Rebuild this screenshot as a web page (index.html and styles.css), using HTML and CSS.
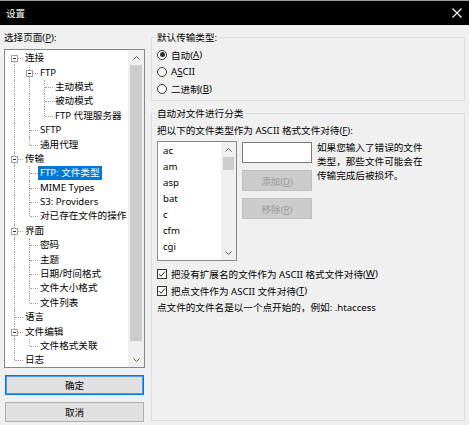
FILE: index.html
```html
<!DOCTYPE html>
<html lang="zh-CN">
<head>
    <meta charset="UTF-8">
    <meta name="viewport" content="width=device-width, initial-scale=1.0">
    <link rel="stylesheet" href="styles.css">
    <title>设置</title>
</head>
<body>
    <div class="titlebar">
        <span class="title">设置</span>
        <svg class="close" width="10" height="10" viewBox="0 0 10 10"><path d="M0.5 0.5L9.5 9.5M9.5 0.5L0.5 9.5" stroke="#fff" stroke-width="1.1"/></svg>
    </div>
    <div class="content">
        <div class="sidebar">
            <div class="label">选择页面(<u>P</u>):</div>
            <div class="tree">
                <div class="nodes">
                    <div class="node"><span class="g f"><i class="box"></i></span><span class="txt">连接</span></div>
                    <div class="node"><span class="g v"></span><span class="g t"><i class="box"></i></span><span class="txt">FTP</span></div>
                    <div class="node"><span class="g v"></span><span class="g v"></span><span class="g t"></span><span class="txt">主动模式</span></div>
                    <div class="node"><span class="g v"></span><span class="g v"></span><span class="g t"></span><span class="txt">被动模式</span></div>
                    <div class="node"><span class="g v"></span><span class="g v"></span><span class="g l"></span><span class="txt">FTP 代理服务器</span></div>
                    <div class="node"><span class="g v"></span><span class="g t"></span><span class="txt">SFTP</span></div>
                    <div class="node"><span class="g v"></span><span class="g l"></span><span class="txt">通用代理</span></div>
                    <div class="node"><span class="g t"><i class="box"></i></span><span class="txt">传输</span></div>
                    <div class="node"><span class="g v"></span><span class="g t"></span><span class="txt sel">FTP: 文件类型</span></div>
                    <div class="node"><span class="g v"></span><span class="g t"></span><span class="txt">MIME Types</span></div>
                    <div class="node"><span class="g v"></span><span class="g t"></span><span class="txt">S3: Providers</span></div>
                    <div class="node"><span class="g v"></span><span class="g l"></span><span class="txt">对已存在文件的操作</span></div>
                    <div class="node"><span class="g t"><i class="box"></i></span><span class="txt">界面</span></div>
                    <div class="node"><span class="g v"></span><span class="g t"></span><span class="txt">密码</span></div>
                    <div class="node"><span class="g v"></span><span class="g t"></span><span class="txt">主题</span></div>
                    <div class="node"><span class="g v"></span><span class="g t"></span><span class="txt">日期/时间格式</span></div>
                    <div class="node"><span class="g v"></span><span class="g t"></span><span class="txt">文件大小格式</span></div>
                    <div class="node"><span class="g v"></span><span class="g l"></span><span class="txt">文件列表</span></div>
                    <div class="node"><span class="g t"></span><span class="txt">语言</span></div>
                    <div class="node"><span class="g t"><i class="box"></i></span><span class="txt">文件编辑</span></div>
                    <div class="node"><span class="g v"></span><span class="g l"></span><span class="txt">文件格式关联</span></div>
                    <div class="node"><span class="g l"></span><span class="txt">日志</span></div>
                </div>
                <div class="scrollbar">
                    <div class="arrow"><svg width="7" height="4" viewBox="0 0 7 4"><path d="M0.5 3.5L3.5 0.5L6.5 3.5" fill="none" stroke="#606060"/></svg></div>
                    <div class="track"><div class="thumb"></div></div>
                    <div class="arrow"><svg width="7" height="4" viewBox="0 0 7 4"><path d="M0.5 0.5L3.5 3.5L6.5 0.5" fill="none" stroke="#606060"/></svg></div>
                </div>
            </div>
            <button class="btn default">确定</button>
            <button class="btn cancel">取消</button>
        </div>

        <div class="panel">
            <div class="group first">
                <div class="legend">默认传输类型:</div>
                <div class="opt"><span class="radio on"></span>自动(<u>A</u>)</div>
                <div class="opt"><span class="radio"></span>A<u>S</u>CII</div>
                <div class="opt"><span class="radio"></span>二进制(<u>B</u>)</div>
            </div>
            <div class="group second">
                <div class="legend">自动对文件进行分类</div>
                <div class="line caption">把以下的文件类型作为 ASCII 格式文件对待(<u>F</u>):</div>
                <div class="types">
                    <div class="listbox">
                        <div class="items">
                            <div>ac</div>
                            <div>am</div>
                            <div>asp</div>
                            <div>bat</div>
                            <div>c</div>
                            <div>cfm</div>
                            <div>cgi</div>
                        </div>
                        <div class="scrollbar small">
                            <div class="arrow"><svg width="7" height="4" viewBox="0 0 7 4"><path d="M0.5 3.5L3.5 0.5L6.5 3.5" fill="none" stroke="#606060"/></svg></div>
                            <div class="track"><div class="thumb"></div></div>
                            <div class="arrow"><svg width="7" height="4" viewBox="0 0 7 4"><path d="M0.5 0.5L3.5 3.5L6.5 0.5" fill="none" stroke="#606060"/></svg></div>
                        </div>
                    </div>
                    <div class="editcol">
                        <div class="edit"></div>
                        <button class="btn disabled">添加(<u>D</u>)</button>
                        <button class="btn disabled">移除(<u>R</u>)</button>
                    </div>
                    <div class="hint">如果您输入了错误的文件<br>类型，那些文件可能会在<br>传输完成后被损坏。</div>
                </div>
                <div class="opt checks"><span class="check"><svg width="8" height="8" viewBox="0 0 8 8"><path d="M1 4.2L3 6.2L7 1.5" fill="none" stroke="#222" stroke-width="1"/></svg></span>把没有扩展名的文件作为 ASCII 格式文件对待(<u>W</u>)</div>
                <div class="opt"><span class="check"><svg width="8" height="8" viewBox="0 0 8 8"><path d="M1 4.2L3 6.2L7 1.5" fill="none" stroke="#222" stroke-width="1"/></svg></span>把点文件作为 ASCII 文件对待(<u>T</u>)</div>
                <div class="line note">点文件的文件名是以一个点开始的，例如: .htaccess</div>
            </div>
        </div>
    </div>
</body>
</html>
```

FILE: styles.css
```css
* {
    box-sizing: border-box;
}

body {
    margin: 0;
    width: 469px;
    height: 425px;
    overflow: hidden;
    background: #f0f0f0;
    font-family: "Noto Sans", "Noto Sans CJK SC", sans-serif;
    font-size: 9.6px;
    color: #000;
}

u {
    text-decoration-thickness: 1px;
    text-underline-offset: 1px;
}

/* title bar */
.titlebar {
    height: 25px;
    border-top: 1px solid #9a9a9a;
    background: #000;
    color: #fff;
    display: flex;
    align-items: center;
    justify-content: space-between;
    padding: 0 7px 0 6px;
}

.content {
    display: flex;
    height: 400px;
}

/* left column */
.sidebar {
    width: 141px;
    margin-left: 4px;
    padding-top: 6px;
    display: flex;
    flex-direction: column;
}

.label {
    line-height: 14px;
}

.tree {
    margin-top: 4px;
    height: 319px;
    border: 1px solid #828790;
    background: #fff;
    display: flex;
}

.nodes {
    flex: 1;
    padding: 1px 0 0 2px;
    overflow: hidden;
}

.node {
    display: flex;
    align-items: center;
    height: 14.4px;
    white-space: nowrap;
}

.g {
    position: relative;
    flex: none;
    width: 15px;
    height: 100%;
}

.g::before {
    content: "";
    position: absolute;
    left: 7px;
    border-left: 1px dotted #a0a0a0;
}

.g.v::before,
.g.t::before {
    top: 0;
    bottom: 0;
}

.g.l::before {
    top: 0;
    height: 50%;
}

.g.f::before {
    top: 50%;
    bottom: 0;
}

.g.t::after,
.g.l::after,
.g.f::after {
    content: "";
    position: absolute;
    left: 8px;
    right: -1px;
    top: 50%;
    border-top: 1px dotted #a0a0a0;
}

.box {
    position: absolute;
    z-index: 1;
    left: 4px;
    top: calc(50% - 3px);
    width: 7px;
    height: 7px;
    border: 1px solid #a0a0a0;
    background: #fff;
}

.box::before {
    content: "";
    position: absolute;
    left: 1px;
    top: 2px;
    width: 3px;
    height: 1px;
    background: #333;
}

.txt {
    margin-left: 1px;
    padding: 0 2px;
    line-height: 14px;
}

.txt.sel {
    background: #0078d7;
    color: #fff;
}

.scrollbar {
    width: 16px;
    flex: none;
    background: #f0f0f0;
    display: flex;
    flex-direction: column;
}

.arrow {
    height: 15px;
    display: flex;
    align-items: center;
    justify-content: center;
}

.track {
    flex: 1;
    padding: 0 2px;
}

.thumb {
    height: 276px;
    background: #cdcdcd;
}

.scrollbar.small {
    width: 15px;
}

.scrollbar.small .thumb {
    height: 13px;
}

.btn {
    font: inherit;
    height: 20px;
    margin: 0 1px;
    padding: 0;
    border: 1px solid #adadad;
    background: #e1e1e1;
    color: #000;
}

.btn.default {
    margin-top: 7px;
    border-color: #0078d7;
    box-shadow: inset 0 0 0 1px #4d9be0;
}

.btn.cancel {
    margin-top: 7px;
}

/* right column */
.panel {
    width: 314px;
    margin-left: 6px;
    padding: 12px 0 4px;
    display: flex;
    flex-direction: column;
}

.group {
    border: 1px solid #dcdcdc;
    padding: 0 0 0 5px;
}

.group.first {
    padding-bottom: 3px;
}

.group.second {
    flex: 1;
    margin-top: 12px;
}

.legend {
    width: fit-content;
    margin: -7px 0 1px -2px;
    padding: 0 2px;
    line-height: 14px;
    background: #f0f0f0;
}

.opt {
    display: flex;
    align-items: center;
    height: 17px;
}

.radio {
    width: 10px;
    height: 10px;
    margin-right: 4px;
    border: 1px solid #333;
    border-radius: 50%;
    background: #fff;
    display: flex;
    align-items: center;
    justify-content: center;
}

.radio.on::before {
    content: "";
    width: 5px;
    height: 5px;
    border-radius: 50%;
    background: #333;
}

.check {
    width: 10px;
    height: 10px;
    margin-right: 4px;
    border: 1px solid #333;
    background: #fff;
    display: flex;
    align-items: center;
    justify-content: center;
}

.line {
    line-height: 14px;
}

.caption {
    margin-top: 3px;
}

.types {
    display: flex;
    margin-top: 3px;
}

.listbox {
    width: 80px;
    height: 120px;
    border: 1px solid #828790;
    background: #fff;
    display: flex;
}

.items {
    flex: 1;
    padding: 1px 0 0 5px;
    overflow: hidden;
}

.items div {
    height: 16px;
    line-height: 16px;
}

.editcol {
    width: 70px;
    margin-left: 5px;
    display: flex;
    flex-direction: column;
}

.edit {
    height: 21px;
    margin-top: 1px;
    border: 1px solid #7a7a7a;
    background: #fff;
}

.btn.disabled {
    height: 21px;
    margin: 7px 0 0;
    border-color: #bfbfbf;
    background: #cccccc;
    color: #9a9a9a;
}

.hint {
    margin-left: 5px;
    line-height: 14px;
}

.checks {
    margin-top: 4px;
}

.note {
    margin-top: 2px;
}
```
